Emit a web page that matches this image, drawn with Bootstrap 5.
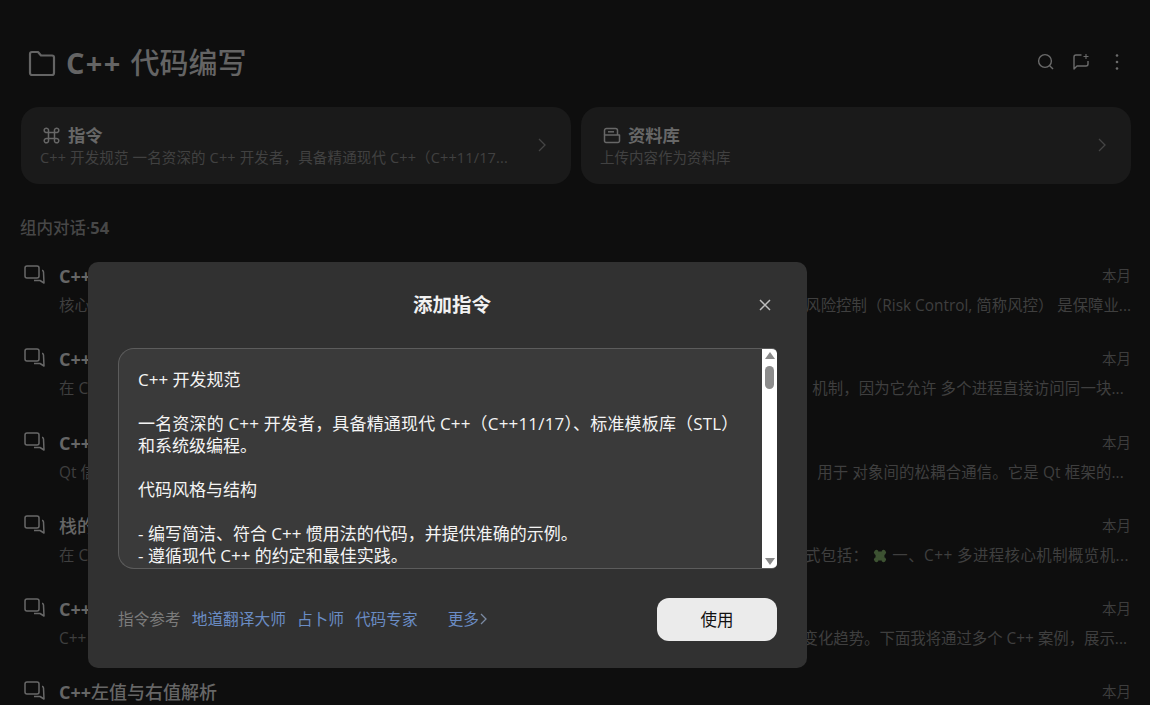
<!DOCTYPE html>
<html lang="zh-CN">
<head>
<meta charset="utf-8">
<title>C++ 代码编写</title>
<link href="https://cdn.jsdelivr.net/npm/bootstrap@5.3.0/dist/css/bootstrap.min.css" rel="stylesheet">
<style>
html,body{height:705px;overflow:hidden}
body{background:#0e0e0e;font-family:"Open Sans","Noto Sans CJK SC",sans-serif;color:#666;position:relative}
.shell{padding:0 19px 0 21px;height:705px;overflow:hidden}
.head-row{height:107px;padding:18px 0 0 7px}
.page-title{font-size:29px;line-height:38px;font-weight:500;color:#646464;margin:0}
.page-title b{font-weight:700;margin-right:9px;letter-spacing:1.300px}
.page-title svg{margin-right:10px}
.tool-ico{color:#6b6b6b}
.tools{gap:17px;padding-right:8px;margin-top:-2px}
.tools .dots{margin-left:4px}
.tile-row{gap:10px}
.tile{flex:1 1 0;min-width:0;height:77px;background:#1a1a1a;border-radius:18px;padding:0 24px 0 19px}
.tile-title{font-size:17.3px;line-height:24px;font-weight:700;color:#676767}
.tile-title svg{margin:0 7px 0 3px}
.tile-title svg.cmd{margin-right:8px}
.tile-sub{font-size:14.5px;line-height:20px;color:#414141;white-space:nowrap}
.tile-sub.long{letter-spacing:.14px}
.tile-arrow{color:#444;margin-top:-2px}
.sec-label{font-size:16.5px;line-height:22px;color:#474747;font-weight:500;margin:33px 0 0 -1px;height:38px}
.sec-label b{font-weight:700}
.rowitem{height:83.25px;padding-left:3px;padding-top:9px}
.rowitem:last-child{height:auto}
.rowitem svg.bub{flex:none;margin:1px 14px 0 0;color:#686868}
.rowbody{flex:1;min-width:0}
.row-top{height:24px;line-height:24px}
.row-title{font-size:18px;font-weight:500;color:#666}
.row-title b{font-weight:700}
.row-date{font-size:14.5px;color:#3d3d3d}
.row-desc{font-size:15.4px;line-height:22px;margin-top:7px;color:#3f3f3f;white-space:nowrap}
.end-7{padding-right:7px;letter-spacing:.14px}
.end-2{padding-right:2px}
.end-4{padding-right:4px}
.tail-text{letter-spacing:.45px}
.dlg{position:absolute;left:88px;top:262px;width:719px;height:406px;background:#313131;border-radius:10px;padding:0 30px}
.dlg-head{height:86px;padding-left:9px}
.dlg-title{font-size:19.5px;font-weight:700;color:#f2f2f2}
.dlg-x{position:absolute;right:36px;top:37px;color:#bdbdbd;line-height:0}
.editor{height:221px;background:#3a3a3a;border:1px solid #5c5c5c;border-right:0;border-radius:16px 5px 5px 16px;overflow:hidden}
.edit-text{flex:1;min-width:0;padding:20px 10px 0 19px;font-size:17px;line-height:22px;color:#f4f4f4;overflow:hidden}
.edit-text .gap-line{margin-top:22px}
.edit-text .wide-line{letter-spacing:.17px;white-space:nowrap}
.rail{flex:none;width:15px;background:#fff;margin-top:-1px;margin-bottom:-1px;border-top-right-radius:5px;padding:4px 2px 0}
.rail i{display:block;width:0;height:0;margin:0 auto}
.rail .up{border-left:5px solid transparent;border-right:5px solid transparent;border-bottom:7px solid #8a8a8a}
.rail .dn{border-left:5px solid transparent;border-right:5px solid transparent;border-top:7px solid #8a8a8a;margin-bottom:4px}
.rail .thumb{width:9px;height:23px;border-radius:5px;background:#8c8c8c;margin-top:7px}
.dlg-foot{height:99px;padding-top:29px;font-size:15.7px}
.ref-line{height:43px}
.ref-label{color:#7c7c7c;margin-right:11px}
.ref-link{color:#6a8cc4;text-decoration:none;margin-right:11px}
.ref-more{color:#6a8cc4;text-decoration:none;margin-left:19px}
.ref-more svg{margin-left:1px}
.use-btn{--bs-btn-bg:#ebebeb;--bs-btn-hover-bg:#ebebeb;--bs-btn-color:#111;--bs-btn-hover-color:#111;--bs-btn-border-width:0;width:120px;height:43px;border-radius:12px;font-size:16.5px;padding-top:7px}
</style>
</head>
<body>
<div class="shell">
  <div class="head-row d-flex align-items-center justify-content-between">
    <h1 class="page-title d-flex align-items-center">
      <svg width="28" height="28" viewBox="0 0 28 28" fill="none" stroke="currentColor" stroke-width="2.2" stroke-linejoin="round"><path d="M2 5a2 2 0 0 1 2-2h6l3 3.500h11a2 2 0 0 1 2 2V24a2 2 0 0 1-2 2H4a2 2 0 0 1-2-2z"/></svg>
      <b>C++</b> 代码编写
    </h1>
    <div class="tools d-flex align-items-center tool-ico">
      <svg width="18" height="18" viewBox="0 0 18 18" fill="none" stroke="currentColor" stroke-width="1.4"><circle cx="8" cy="8" r="6.400"/><path d="M12.700 12.700 16 16"/></svg>
      <svg width="18" height="18" viewBox="0 0 18 18" fill="none" stroke="currentColor" stroke-width="1.4" stroke-linejoin="round"><path d="M9.500 2H4a2 2 0 0 0-2 2v12l3-3h9a2 2 0 0 0 2-2V8"/><path d="M14 1v5M11.500 3.500h5" stroke-width="1.100"/></svg>
      <svg class="dots" width="12" height="18" viewBox="0 0 12 18" fill="currentColor"><circle cx="6" cy="2.500" r="1.300"/><circle cx="6" cy="9" r="1.300"/><circle cx="6" cy="15.500" r="1.300"/></svg>
    </div>
  </div>
  <div class="tile-row d-flex">
    <div class="tile d-flex align-items-center justify-content-between">
      <div class="overflow-hidden">
        <div class="tile-title d-flex align-items-center">
          <svg class="cmd" width="17" height="17" viewBox="0 0 17 17" fill="none" stroke="currentColor" stroke-width="1.500"><path d="M5.500 5.500h6v6h-6zM5.500 5.500H4a2.200 2.200 0 1 1 1.500-1.500zM11.500 5.500V4A2.200 2.200 0 1 1 13 5.500zM5.500 11.500V13A2.200 2.200 0 1 1 4 11.500zM11.500 11.500H13a2.200 2.200 0 1 1-1.500 1.500z"/></svg>
          指令
        </div>
        <div class="tile-sub long">C++ 开发规范 一名资深的 C++ 开发者，具备精通现代 C++（C++11/17...</div>
      </div>
      <svg class="tile-arrow" width="10" height="16" viewBox="0 0 10 16" fill="none" stroke="currentColor" stroke-width="1.300"><path d="m2 2 6 6-6 6"/></svg>
    </div>
    <div class="tile d-flex align-items-center justify-content-between">
      <div>
        <div class="tile-title d-flex align-items-center">
          <svg width="18" height="17" viewBox="0 0 18 17" fill="none" stroke="currentColor" stroke-width="1.500" stroke-linejoin="round"><path d="M1.500 8V3.500a2 2 0 0 1 2-2h9a2 2 0 0 1 2 2V8"/><path d="M1.500 8h15v6a1.500 1.500 0 0 1-1.500 1.500H3A1.500 1.500 0 0 1 1.500 14z"/><path d="M5 4.800h6"/></svg>
          资料库
        </div>
        <div class="tile-sub">上传内容作为资料库</div>
      </div>
      <svg class="tile-arrow" width="10" height="16" viewBox="0 0 10 16" fill="none" stroke="currentColor" stroke-width="1.300"><path d="m2 2 6 6-6 6"/></svg>
    </div>
  </div>
  <div class="sec-label">组内对话·<b>54</b></div>

  <div class="rowitem d-flex">
    <svg class="bub" width="21" height="19" viewBox="0 0 21 19" fill="none" stroke="currentColor" stroke-width="1.500" stroke-linejoin="round"><path d="M3 1h10a2 2 0 0 1 2 2v8a2 2 0 0 1-2 2H3a2 2 0 0 1-2-2V3a2 2 0 0 1 2-2z"/><path d="M18 5.500h.5q1 .5 1 1.500L20 18l-4-2.500h-6"/></svg>
    <div class="rowbody">
      <div class="row-top d-flex justify-content-between"><span class="row-title"><b>C++</b></span><span class="row-date">本月</span></div>
      <div class="row-desc d-flex justify-content-between"><span>核心</span><span>风险控制（Risk Control, 简称风控） 是保障业...</span></div>
    </div>
  </div>
  <div class="rowitem d-flex">
    <svg class="bub" width="21" height="19" viewBox="0 0 21 19" fill="none" stroke="currentColor" stroke-width="1.500" stroke-linejoin="round"><path d="M3 1h10a2 2 0 0 1 2 2v8a2 2 0 0 1-2 2H3a2 2 0 0 1-2-2V3a2 2 0 0 1 2-2z"/><path d="M18 5.500h.5q1 .5 1 1.500L20 18l-4-2.500h-6"/></svg>
    <div class="rowbody">
      <div class="row-top d-flex justify-content-between"><span class="row-title"><b>C++</b></span><span class="row-date">本月</span></div>
      <div class="row-desc d-flex justify-content-between"><span>在 C</span><span class="end-7">机制，因为它允许 多个进程直接访问同一块...</span></div>
    </div>
  </div>
  <div class="rowitem d-flex">
    <svg class="bub" width="21" height="19" viewBox="0 0 21 19" fill="none" stroke="currentColor" stroke-width="1.500" stroke-linejoin="round"><path d="M3 1h10a2 2 0 0 1 2 2v8a2 2 0 0 1-2 2H3a2 2 0 0 1-2-2V3a2 2 0 0 1 2-2z"/><path d="M18 5.500h.5q1 .5 1 1.500L20 18l-4-2.500h-6"/></svg>
    <div class="rowbody">
      <div class="row-top d-flex justify-content-between"><span class="row-title"><b>C++</b></span><span class="row-date">本月</span></div>
      <div class="row-desc d-flex justify-content-between"><span>Qt 信</span><span class="end-7">用于 对象间的松耦合通信。它是 Qt 框架的...</span></div>
    </div>
  </div>
  <div class="rowitem d-flex">
    <svg class="bub" width="21" height="19" viewBox="0 0 21 19" fill="none" stroke="currentColor" stroke-width="1.500" stroke-linejoin="round"><path d="M3 1h10a2 2 0 0 1 2 2v8a2 2 0 0 1-2 2H3a2 2 0 0 1-2-2V3a2 2 0 0 1 2-2z"/><path d="M18 5.500h.5q1 .5 1 1.500L20 18l-4-2.500h-6"/></svg>
    <div class="rowbody">
      <div class="row-top d-flex justify-content-between"><span class="row-title">栈的</span><span class="row-date">本月</span></div>
      <div class="row-desc d-flex justify-content-between"><span>在 C</span><span class="d-inline-flex align-items-center end-2 tail-text">式包括： <svg class="mx-1" width="16" height="16" viewBox="0 0 16 16" fill="#3d5232"><g transform="rotate(45 8 8)"><rect x="4.500" y="4.500" width="7" height="7"/><circle cx="8" cy="3" r="2.500"/><circle cx="8" cy="13" r="2.500"/><circle cx="3" cy="8" r="2.500"/><circle cx="13" cy="8" r="2.500"/></g></svg> 一、C++ 多进程核心机制概览机...</span></div>
    </div>
  </div>
  <div class="rowitem d-flex">
    <svg class="bub" width="21" height="19" viewBox="0 0 21 19" fill="none" stroke="currentColor" stroke-width="1.500" stroke-linejoin="round"><path d="M3 1h10a2 2 0 0 1 2 2v8a2 2 0 0 1-2 2H3a2 2 0 0 1-2-2V3a2 2 0 0 1 2-2z"/><path d="M18 5.500h.5q1 .5 1 1.500L20 18l-4-2.500h-6"/></svg>
    <div class="rowbody">
      <div class="row-top d-flex justify-content-between"><span class="row-title"><b>C++</b></span><span class="row-date">本月</span></div>
      <div class="row-desc d-flex justify-content-between"><span>C++</span><span class="end-4">变化趋势。下面我将通过多个 C++ 案例，展示...</span></div>
    </div>
  </div>
  <div class="rowitem d-flex">
    <svg class="bub" width="21" height="19" viewBox="0 0 21 19" fill="none" stroke="currentColor" stroke-width="1.500" stroke-linejoin="round"><path d="M3 1h10a2 2 0 0 1 2 2v8a2 2 0 0 1-2 2H3a2 2 0 0 1-2-2V3a2 2 0 0 1 2-2z"/><path d="M18 5.500h.5q1 .5 1 1.500L20 18l-4-2.500h-6"/></svg>
    <div class="rowbody">
      <div class="row-top d-flex justify-content-between"><span class="row-title"><b>C++</b>左值与右值解析</span><span class="row-date">本月</span></div>
    </div>
  </div>
</div>

<div class="dlg" role="dialog">
  <div class="dlg-head d-flex align-items-center justify-content-center"><span class="dlg-title">添加指令</span></div>
  <button class="dlg-x btn p-0 border-0" aria-label="关闭"><svg width="12" height="12" viewBox="0 0 12 12" fill="none" stroke="currentColor" stroke-width="1.500"><path d="m1 1 10 10M11 1 1 11"/></svg></button>
  <div class="editor d-flex">
    <div class="edit-text">
      <div>C++ 开发规范</div>
      <div class="gap-line wide-line">一名资深的 C++ 开发者，具备精通现代 C++（C++11/17）、标准模板库（STL）</div>
      <div>和系统级编程。</div>
      <div class="gap-line">代码风格与结构</div>
      <div class="gap-line">- 编写简洁、符合 C++ 惯用法的代码，并提供准确的示例。</div>
      <div>- 遵循现代 C++ 的约定和最佳实践。</div>
    </div>
    <div class="rail d-flex flex-column"><i class="up"></i><i class="thumb"></i><i class="dn mt-auto"></i></div>
  </div>
  <div class="dlg-foot d-flex align-items-start justify-content-between">
    <div class="ref-line d-flex align-items-center">
      <span class="ref-label">指令参考</span>
      <a class="ref-link" href="#">地道翻译大师</a>
      <a class="ref-link" href="#">占卜师</a>
      <a class="ref-link" href="#">代码专家</a>
      <a class="ref-more d-inline-flex align-items-center" href="#">更多<svg width="8" height="12" viewBox="0 0 8 12" fill="none" stroke="#7c8ba3" stroke-width="1.300"><path d="m1 1 5 5-5 5"/></svg></a>
    </div>
    <button class="btn use-btn">使用</button>
  </div>
</div>
<script src="https://cdn.jsdelivr.net/npm/bootstrap@5.3.0/dist/js/bootstrap.bundle.min.js"></script>
</body>
</html>
